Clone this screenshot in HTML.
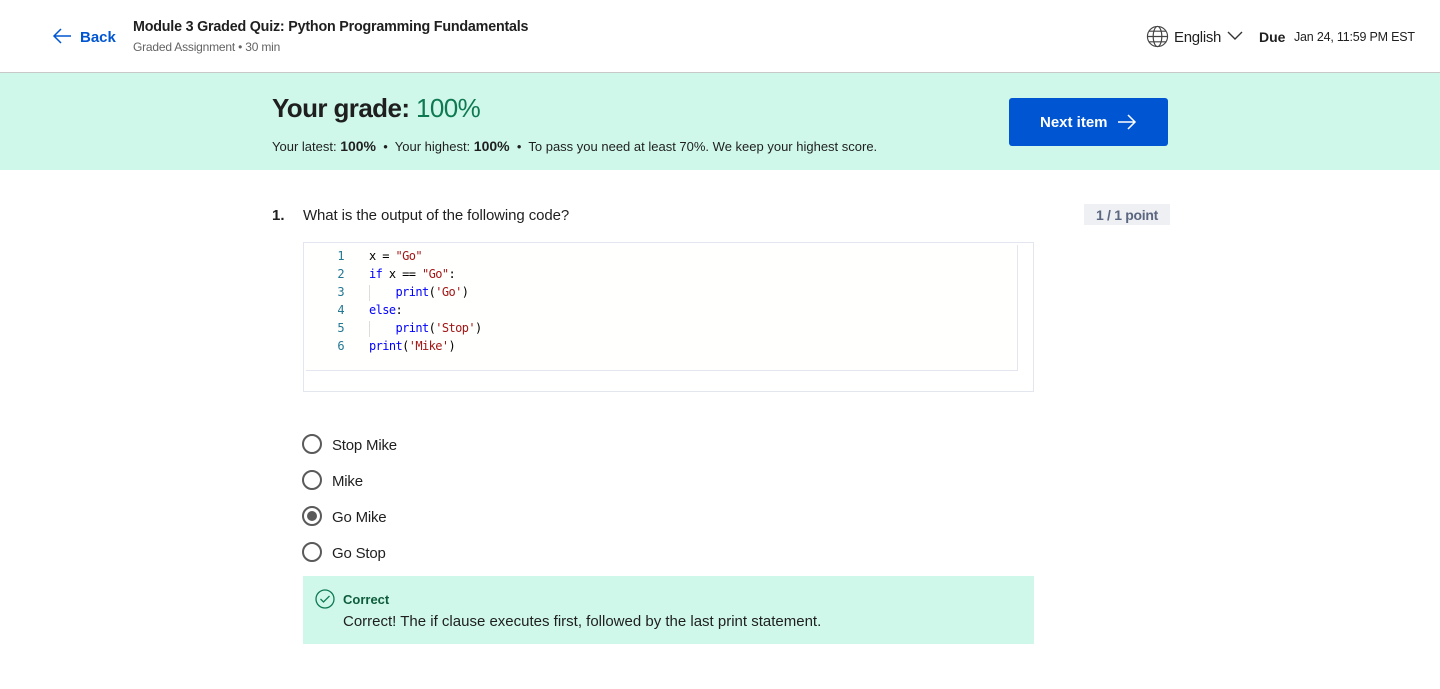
<!DOCTYPE html>
<html><head><meta charset="utf-8"><style>
*{box-sizing:border-box;margin:0;padding:0}
body{width:1440px;height:689px;background:#fff;font-family:"Liberation Sans",sans-serif;color:#1f1f1f;position:relative;overflow:hidden}
.abs{position:absolute}
.hdr{left:0;top:0;width:1440px;height:73px;border-bottom:1px solid #c8c8c8}
.banner{left:0;top:73px;width:1440px;height:97px;background:#cff8eb}
.code{left:303px;top:242px;width:731px;height:150px;border:1px solid #e3e6ee;background:#fff}
.code .in{position:absolute;left:2px;top:2px;width:712px;height:126px;background:#fffffd;border-right:1px solid #e3e6ee;border-bottom:1px solid #e3e6ee}
.ln{position:absolute;left:0;width:38px;text-align:right;font:12px "DejaVu Sans Mono",monospace;color:#237893;letter-spacing:-0.6px}
.cl{position:absolute;left:63px;font:12px "DejaVu Sans Mono",monospace;color:#000;white-space:pre;letter-spacing:-0.6px}
.k{color:#0000ff}.s{color:#a31515}
.radio{width:20px;height:20px;border:2px solid #5a5a5a;border-radius:50%}
.opt{font-size:15px;color:#1f1f1f;letter-spacing:-0.2px}
</style></head><body>
<div class="abs hdr"></div>
<svg class="abs" style="left:52px;top:27px" width="20" height="18" viewBox="0 0 20 18"><path d="M9 2L2 9l7 7M2 9h17" fill="none" stroke="#0056d2" stroke-width="1.5"/></svg>
<div class="abs" style="left:80px;top:29px;font-size:15px;font-weight:bold;color:#0056d2">Back</div>
<div class="abs" style="left:133px;top:19px;font-size:14.3px;font-weight:bold;letter-spacing:-0.2px">Module 3 Graded Quiz: Python Programming Fundamentals</div>
<div class="abs" style="left:133px;top:40px;font-size:12px;color:#636363;letter-spacing:-0.2px">Graded Assignment • 30 min</div>
<svg class="abs" style="left:1146px;top:25px" width="23" height="23" viewBox="0 0 24 24" fill="none" stroke="#444" stroke-width="1.2"><circle cx="12" cy="12" r="10.5"/><ellipse cx="12" cy="12" rx="4.5" ry="10.5"/><path d="M1.5 12h21M3 6.5h18M3 17.5h18"/></svg>
<div class="abs" style="left:1174px;top:29px;font-size:15px;letter-spacing:-0.3px">English</div>
<svg class="abs" style="left:1227px;top:31px" width="16" height="10" viewBox="0 0 16 10"><path d="M1 1l7 7 7-7" fill="none" stroke="#333" stroke-width="1.4"/></svg>
<div class="abs" style="left:1259px;top:29px;font-size:14px;font-weight:bold">Due</div>
<div class="abs" style="left:1294px;top:30px;font-size:12.5px;letter-spacing:-0.2px">Jan 24, 11:59 PM EST</div>
<div class="abs banner"></div>
<div class="abs" style="left:272px;top:93px;font-size:26px;font-weight:bold;letter-spacing:-0.6px">Your grade: <span style="color:#0f7a52;font-weight:normal">100%</span></div>
<div class="abs" style="left:272px;top:138px;font-size:13px">Your latest: <b style="font-size:14px">100%</b> &nbsp;•&nbsp; Your highest: <b style="font-size:14px">100%</b> &nbsp;•&nbsp; To pass you need at least 70%. We keep your highest score.</div>
<div class="abs" style="left:1009px;top:98px;width:159px;height:48px;background:#0056d2;border-radius:3px;color:#fff;font-size:15px;font-weight:bold;padding:16px 0 0 31px">Next item</div>
<svg class="abs" style="left:1117px;top:113px" width="20" height="18" viewBox="0 0 20 18"><path d="M11 2l7 7-7 7M1 9h17" fill="none" stroke="#fff" stroke-width="1.5"/></svg>
<div class="abs" style="left:272px;top:207px;font-size:15px;font-weight:bold">1.</div>
<div class="abs" style="left:303px;top:207px;font-size:15px;letter-spacing:-0.1px">What is the output of the following code?</div>
<div class="abs" style="left:1084px;top:204px;width:86px;height:21px;background:#eef0f3;font-size:14px;font-weight:bold;color:#5b6780;text-align:center;padding-top:3px;letter-spacing:-0.3px">1 / 1 point</div>
<div class="abs code"><div class="in">
<div class="ln" style="top:4px">1</div><div class="cl" style="top:4px">x = <span class="s">"Go"</span></div>
<div class="ln" style="top:22px">2</div><div class="cl" style="top:22px"><span class="k">if</span> x == <span class="s">"Go"</span>:</div>
<div class="ln" style="top:40px">3</div><div class="cl" style="top:40px">    <span class="k">print</span>(<span class="s">'Go'</span>)</div>
<div class="ln" style="top:58px">4</div><div class="cl" style="top:58px"><span class="k">else</span>:</div>
<div class="ln" style="top:76px">5</div><div class="cl" style="top:76px">    <span class="k">print</span>(<span class="s">'Stop'</span>)</div>
<div class="ln" style="top:94px">6</div><div class="cl" style="top:94px"><span class="k">print</span>(<span class="s">'Mike'</span>)</div>
<div style="position:absolute;left:63px;top:40px;width:1px;height:16px;background:#ddd"></div>
<div style="position:absolute;left:63px;top:76px;width:1px;height:16px;background:#ddd"></div>
</div></div>
<div class="abs radio" style="left:302px;top:434px"></div><div class="abs opt" style="left:332px;top:437px">Stop Mike</div>
<div class="abs radio" style="left:302px;top:470px"></div><div class="abs opt" style="left:332px;top:473px">Mike</div>
<div class="abs radio" style="left:302px;top:506px"><div style="position:absolute;left:3px;top:3px;width:10px;height:10px;border-radius:50%;background:#5a5a5a"></div></div><div class="abs opt" style="left:332px;top:509px">Go Mike</div>
<div class="abs radio" style="left:302px;top:542px"></div><div class="abs opt" style="left:332px;top:545px">Go Stop</div>
<div class="abs" style="left:303px;top:576px;width:731px;height:68px;background:#cff8eb"></div>
<svg class="abs" style="left:315px;top:589px" width="20" height="20" viewBox="0 0 20 20" fill="none" stroke="#0f7a52" stroke-width="1.3"><circle cx="10" cy="10" r="9"/><path d="M5.5 10l3 3 6-6"/></svg>
<div class="abs" style="left:343px;top:592px;font-size:13px;font-weight:bold;color:#0f5c3c">Correct</div>
<div class="abs" style="left:343px;top:613px;font-size:15px">Correct! The if clause executes first, followed by the last print statement.</div>
</body></html>
